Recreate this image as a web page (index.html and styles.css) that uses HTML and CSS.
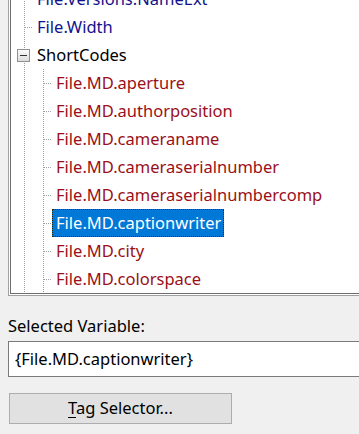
FILE: index.html
```html
<!DOCTYPE html>
<html lang="en">
<head>
  <meta charset="UTF-8">
  <meta name="viewport" content="width=device-width, initial-scale=1.0">
  <link rel="stylesheet" href="styles.css">
  <title>Variable Picker</title>
</head>
<body>
  <div class="panel">
    <!-- tree, scrolled down a little -->
    <div class="tree">
      <ul class="nodes">
        <li class="row var"><span class="cell branch"></span><span class="label">File.Versions.NameExt</span></li>
        <li class="row var"><span class="cell branch"></span><span class="label">File.Width</span></li>
        <li class="row group"><span class="cell expander"><span class="box"></span></span><span class="label">ShortCodes</span></li>
        <li class="row code"><span class="cell line"></span><span class="cell branch"></span><span class="label">File.MD.aperture</span></li>
        <li class="row code"><span class="cell line"></span><span class="cell branch"></span><span class="label">File.MD.authorposition</span></li>
        <li class="row code"><span class="cell line"></span><span class="cell branch"></span><span class="label">File.MD.cameraname</span></li>
        <li class="row code"><span class="cell line"></span><span class="cell branch"></span><span class="label">File.MD.cameraserialnumber</span></li>
        <li class="row code"><span class="cell line"></span><span class="cell branch"></span><span class="label">File.MD.cameraserialnumbercomp</span></li>
        <li class="row code selected"><span class="cell line"></span><span class="cell branch"></span><span class="label">File.MD.captionwriter</span></li>
        <li class="row code"><span class="cell line"></span><span class="cell branch"></span><span class="label">File.MD.city</span></li>
        <li class="row code"><span class="cell line"></span><span class="cell branch"></span><span class="label">File.MD.colorspace</span></li>
      </ul>
    </div>

    <p class="caption">Selected Variable:</p>
    <div class="field">{File.MD.captionwriter}</div>

    <button class="btn" type="button"><u>T</u>ag Selector...</button>
  </div>
</body>
</html>
```

FILE: styles.css
```css
html, body {
  margin: 0;
  background-color: #f0f0f0;
  font-family: "Noto Sans", "Open Sans", sans-serif;
  font-size: 16.5px;
  color: #000;
}

body {
  overflow: hidden;
}

.panel {
  padding-left: 8px;
  margin-right: -40px;
}

.tree {
  margin-top: -16px;
  height: 312px;
  box-sizing: border-box;
  border: 1px solid #a0a0a0;
  box-shadow: inset 0 0 0 1px #fff, inset 0 0 0 2px #6e6e6e;
  background-color: #fff;
  overflow: hidden;
}

.nodes {
  list-style: none;
  margin: 0;
  padding: 0 0 0 5px;
}

.row {
  display: flex;
  align-items: stretch;
  height: 28px;
  --dots: repeating-linear-gradient(to bottom, #a0a0a0 0 1px, transparent 1px 2px);
  --hdots: repeating-linear-gradient(to right, #a0a0a0 0 1px, transparent 1px 2px);
}

.cell {
  width: 19px;
  flex: none;
  display: flex;
  align-items: center;
}

.line {
  background: var(--dots) 10px 0 / 1px 100% no-repeat;
}

.branch {
  background:
    var(--dots) 10px 0 / 1px 100% no-repeat,
    var(--hdots) 11px 14px / 9px 1px no-repeat;
}

.expander {
  background: var(--dots) 10px 0 / 1px 100% no-repeat;
}

.box {
  width: 11px;
  height: 11px;
  margin-left: 3px;
  border: 1px solid #919191;
  background: linear-gradient(#fafafa, #dcdcdc);
  display: flex;
  align-items: center;
  justify-content: center;
}

.box::before {
  content: "";
  width: 7px;
  height: 1px;
  background-color: #333;
}

.label {
  display: flex;
  align-items: center;
  margin-left: 4px;
  padding: 0 3px 0 0;
  white-space: nowrap;
  line-height: 1;
}

.var .label {
  color: #12128c;
}

.code .label {
  color: #9a0f18;
  margin-left: 0;
  padding-left: 4px;
}

.selected .label {
  background-color: #0078d7;
  color: #fff;
  outline: 1px dotted #3a2a00;
  outline-offset: -1px;
}

.caption {
  margin: 20px 0 0;
  line-height: 20px;
}

.field {
  margin-top: 5px;
  height: 36px;
  box-sizing: border-box;
  border: 1px solid #7a7a7a;
  background-color: #fff;
  padding-left: 6px;
  line-height: 33px;
}

.btn {
  display: block;
  margin: 16px 0 0 1px;
  width: 223px;
  height: 31px;
  border: 1px solid #adadad;
  background-color: #e1e1e1;
  font: inherit;
  color: #000;
  padding: 0 0 2px;
}

.btn u {
  text-underline-offset: 3px;
}
```
